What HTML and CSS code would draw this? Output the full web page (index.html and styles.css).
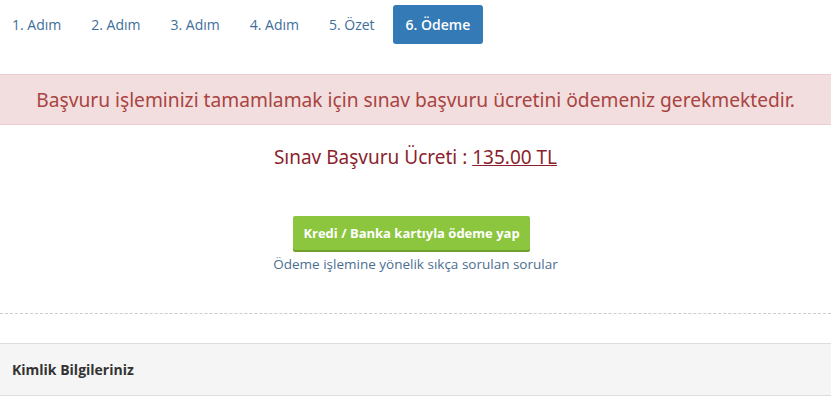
FILE: index.html
```html
<!DOCTYPE html>
<html lang="tr">
<head>
  <meta charset="UTF-8" />
  <meta name="viewport" content="width=device-width, initial-scale=1.0">
  <title>Başvuru - Ödeme</title>
  <link rel="stylesheet" href="styles.css">
</head>
<body>
  <!-- adımlar -->
  <ul class="steps">
    <li><a href="#">1. Adım</a></li>
    <li><a href="#">2. Adım</a></li>
    <li><a href="#">3. Adım</a></li>
    <li><a href="#">4. Adım</a></li>
    <li><a href="#">5. Özet</a></li>
    <li class="active"><a href="#">6. Ödeme</a></li>
  </ul>

  <div class="alert">
    Başvuru işleminizi tamamlamak için sınav başvuru ücretini ödemeniz gerekmektedir.
  </div>

  <div class="payment">
    <p class="fee">Sınav Başvuru Ücreti : <u>135.00 TL</u></p>
    <a class="pay-btn" href="#">Kredi / Banka kartıyla ödeme yap</a>
    <a class="faq" href="#">Ödeme işlemine yönelik sıkça sorulan sorular</a>
  </div>

  <hr class="dashed">

  <div class="panel">
    <div class="panel-heading">Kimlik Bilgileriniz</div>
  </div>
</body>
</html>
```

FILE: styles.css
```css
body {
  margin: 0;
  font-family: 'Open Sans', sans-serif;
  font-size: 13px;
  color: #333;
  background: #fff;
}
a {
  text-decoration: none;
}
.steps {
  list-style: none;
  margin: 0;
  padding: 5px 0 0 0;
  display: flex;
  gap: 6px;
}
.steps a {
  display: block;
  padding: 10px 12px;
  font-size: 14px;
  line-height: 19px;
  color: #3d6e9a;
  border-radius: 3px;
}
.steps .active a {
  background: #337ab7;
  color: #fff;
  font-weight: 600;
  padding: 10px 13px;
}
.alert {
  margin-top: 30px;
  background: #f2dede;
  border-top: 1px solid #ebccd1;
  border-bottom: 1px solid #ebccd1;
  color: #a94442;
  font-family: 'Noto Sans', sans-serif;
  font-size: 19.2px;
  text-align: center;
  padding: 12px 0;
  line-height: 25px;
}
.payment {
  text-align: center;
  padding-top: 19px;
}
.fee {
  margin: 0;
  font-family: 'Noto Sans', sans-serif;
  font-size: 19px;
  line-height: 26px;
  color: #8b1f2e;
}
.pay-btn {
  display: inline-block;
  margin: 46px 8px 0 0;
  background: #8cc63f;
  color: #fff;
  font-weight: 700;
  padding: 8px 10px;
  line-height: 18px;
  border-radius: 2px;
  box-shadow: 0 2px 0 #6f9e2f;
}
.faq {
  display: block;
  margin-top: 5px;
  font-size: 13.5px;
  color: #4a6f93;
  line-height: 18px;
}
.dashed {
  margin: 40px 0 0 0;
  border: 0;
  border-top: 1px dashed #ccc;
}
.panel {
  margin-top: 29px;
  border-top: 1px solid #ddd;
  border-bottom: 1px solid #ddd;
}
.panel-heading {
  background: #f5f5f5;
  padding: 16px 12px;
  font-size: 14px;
  font-weight: 700;
  line-height: 19px;
  color: #333;
}
```
